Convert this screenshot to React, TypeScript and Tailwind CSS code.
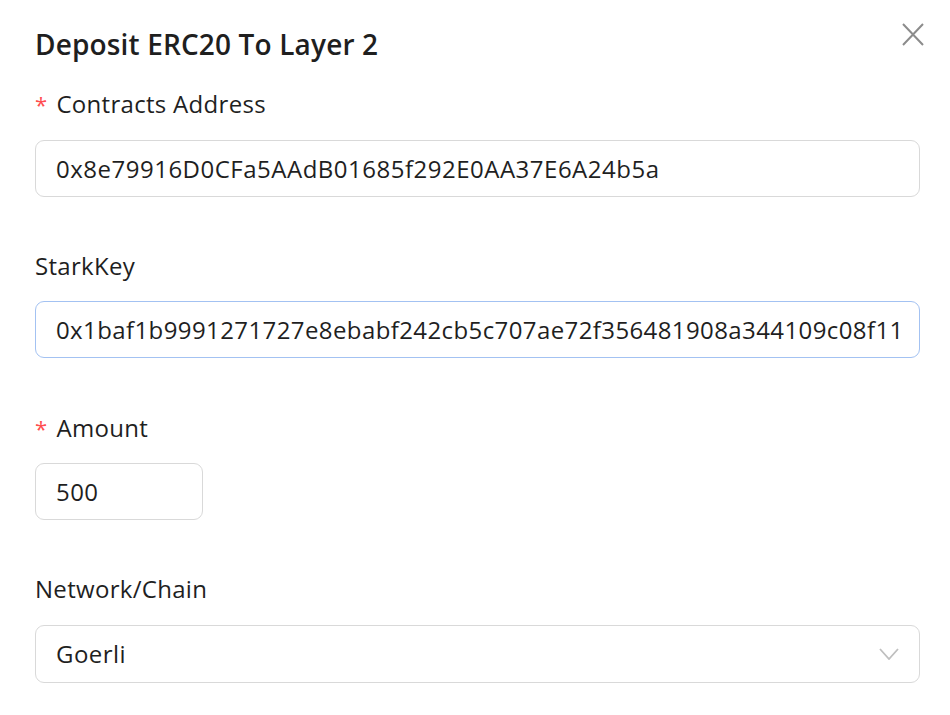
import React from "react";

const font = { fontFamily: '"Open Sans", "Noto Sans", sans-serif' };

function Label({ text, required }: { text: string; required?: boolean }) {
  return (
    <div className="flex items-center h-[36px] text-[24px] leading-[36px] text-[#1f1f1f] tracking-[0.3px]">
      {required && <span className="text-[#ff4d4f] text-[22px] mr-[9px] leading-none">*</span>}
      <span>{text}</span>
    </div>
  );
}

function Input({ value, focused, className = "" }: { value: string; focused?: boolean; className?: string }) {
  return (
    <div
      className={`h-[57px] rounded-[9px] border flex items-center pl-[20px] pr-[10px] text-[24px] text-[#1f1f1f] whitespace-nowrap overflow-hidden bg-white ${
        focused ? "border-[#a3c2f2]" : "border-[#d9d9d9]"
      } ${className}`}
    >
      {value}
    </div>
  );
}

export default function App() {
  return (
    <div className="w-[950px] h-[715px] bg-white relative overflow-hidden" style={font}>
      <button className="absolute left-[902px] top-[23px] w-[22px] h-[23px] text-[#8c8c8c]">
        <svg viewBox="0 0 22 23" width="22" height="23" fill="none" stroke="currentColor" strokeWidth="2">
          <path d="M1 1L21 22M21 1L1 22" />
        </svg>
      </button>
      <div className="flex flex-col pl-[35px] pr-[30px]">
        <div className="mt-[26px] h-[36px] leading-[36px] text-[28px] font-semibold text-[#1f1f1f] tracking-[0.15px]">
          Deposit ERC20 To Layer 2
        </div>
        <div className="mt-[24px]">
          <Label text="Contracts Address" required />
        </div>
        <Input className="mt-[18px] tracking-[0.5px]" value="0x8e79916D0CFa5AAdB01685f292E0AA37E6A24b5a" />
        <div className="mt-[51px]">
          <Label text="StarkKey" />
        </div>
        <Input className="mt-[17px] tracking-[0.4px]" focused value="0x1baf1b9991271727e8ebabf242cb5c707ae72f356481908a344109c08f11" />
        <div className="mt-[52px]">
          <Label text="Amount" required />
        </div>
        <Input className="mt-[17px] w-[168px] tracking-[0.45px]" value="500" />
        <div className="mt-[51px]">
          <Label text="Network/Chain" />
        </div>
        <div className="mt-[18px] h-[58px] rounded-[9px] border border-[#d9d9d9] flex items-center justify-between pl-[20px] pr-[20px] text-[24px] tracking-[0.45px] text-[#1f1f1f]">
          <span>Goerli</span>
          <svg viewBox="0 0 20 12" width="20" height="12" fill="none" stroke="#bfbfbf" strokeWidth="1.8">
            <path d="M1 1L10 11L19 1" />
          </svg>
        </div>
      </div>
    </div>
  );
}
